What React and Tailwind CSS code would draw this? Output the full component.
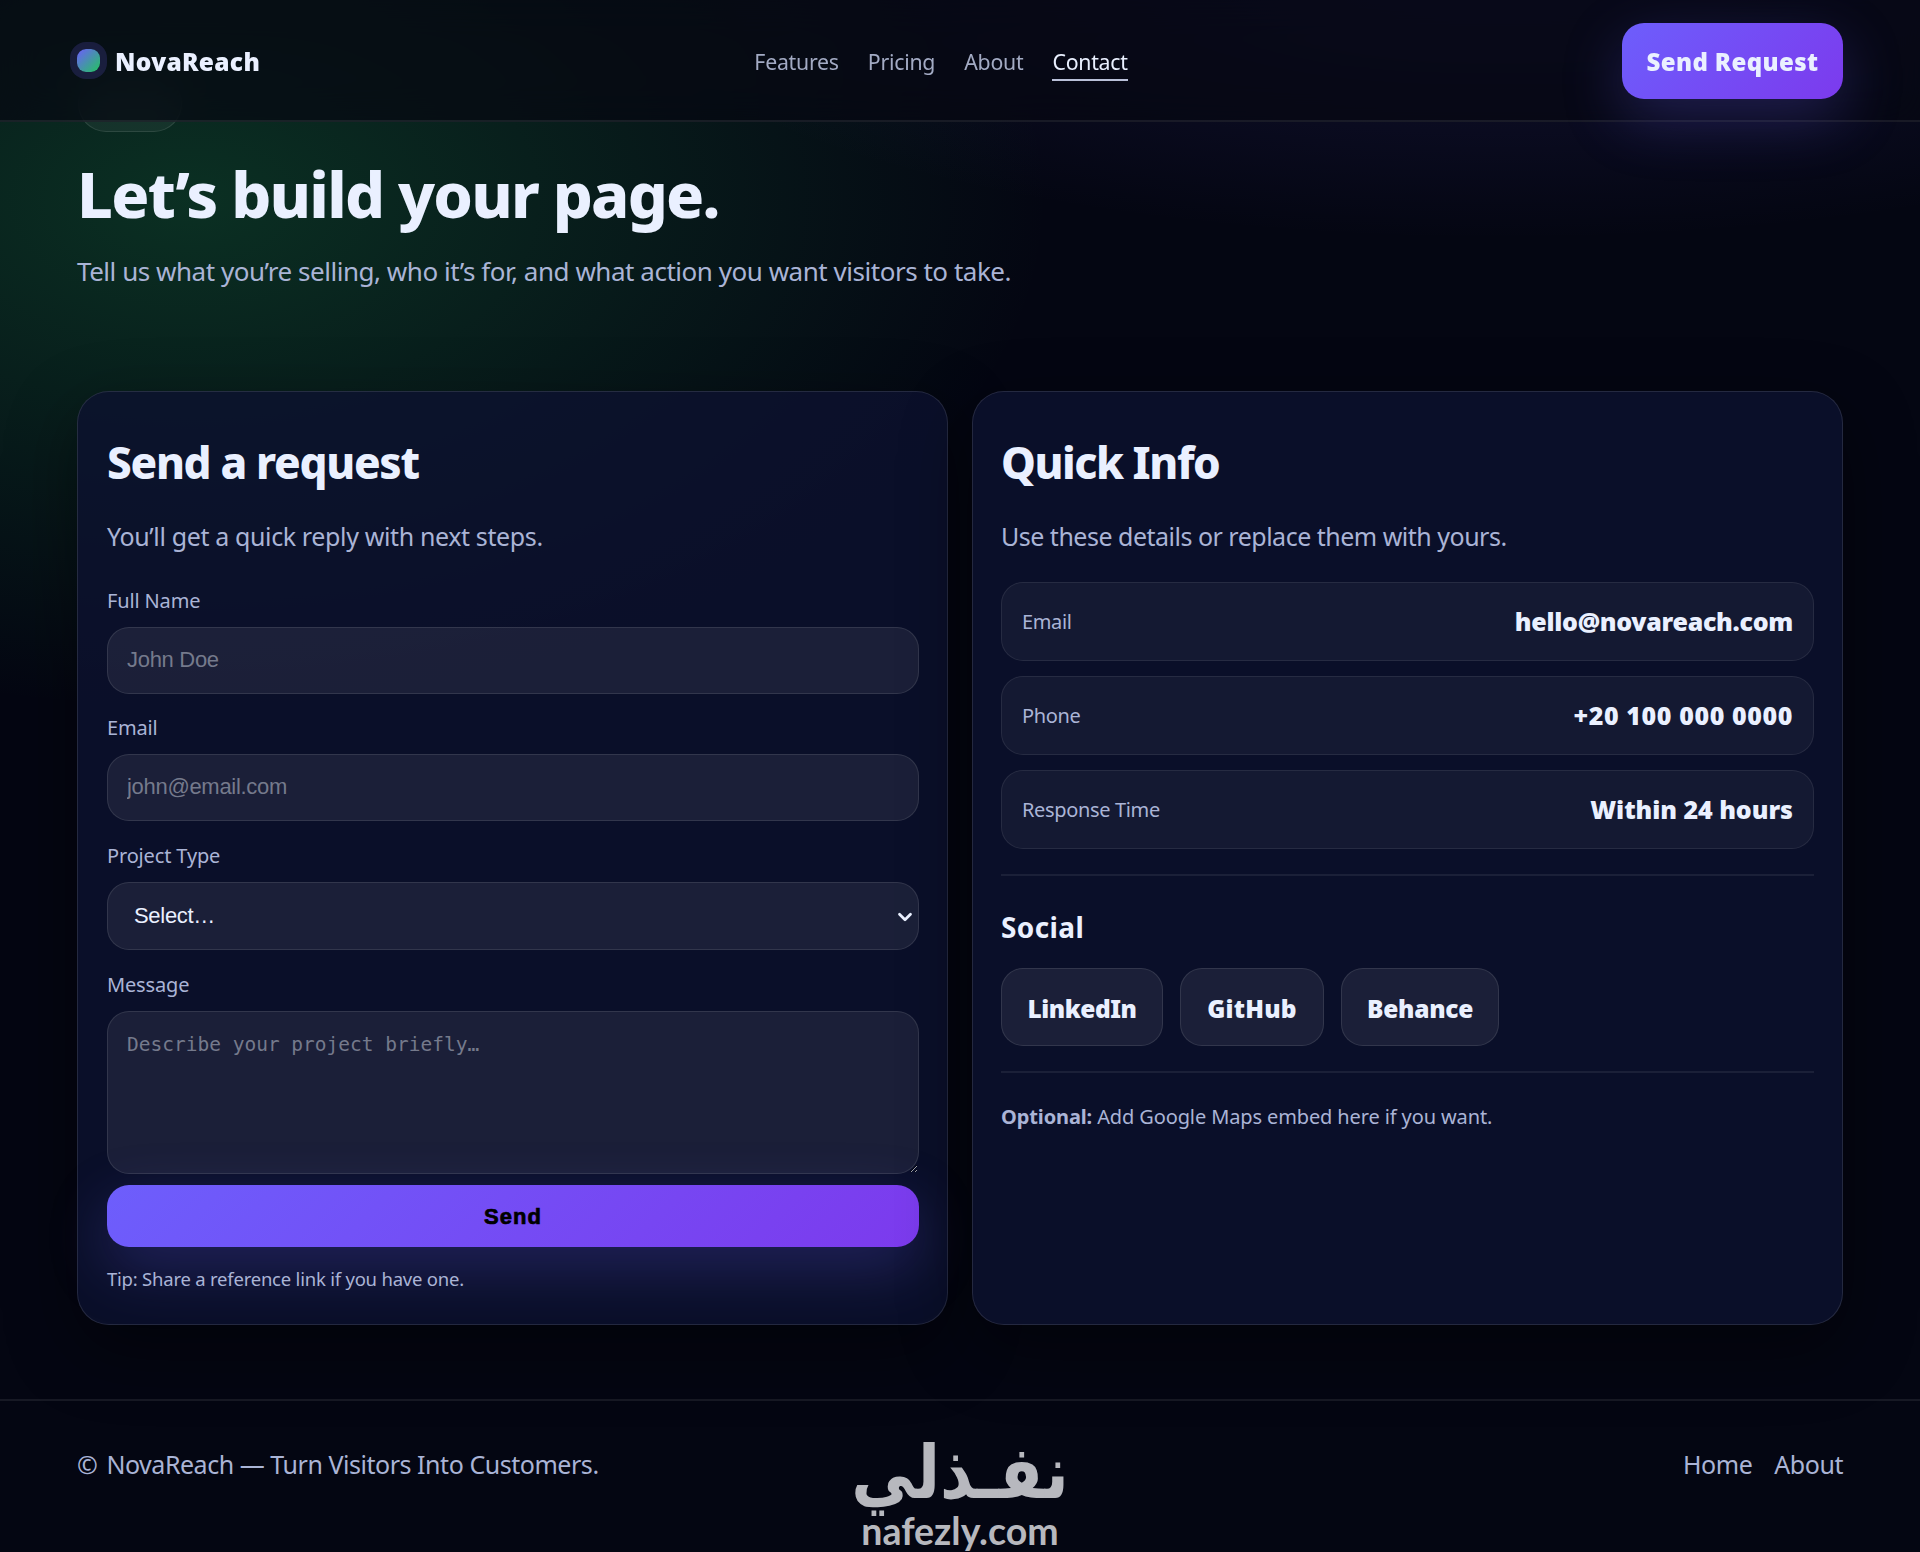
import { ChevronDown } from 'lucide-react';

const navLinks = ['Features', 'Pricing', 'About', 'Contact'];

const details = [
  { label: 'Email', value: 'hello@novareach.com', tracking: 'tracking-[-0.3px]' },
  { label: 'Phone', value: '+20 100 000 0000', tracking: 'tracking-[0.6px]' },
  { label: 'Response Time', value: 'Within 24 hours', tracking: 'tracking-[-0.05px]' },
];

const socials = [
  { name: 'LinkedIn', width: 'w-[162px]', tracking: 'tracking-[-0.5px]' },
  { name: 'GitHub', width: 'w-[144px]', tracking: 'tracking-[0.2px]' },
  { name: 'Behance', width: 'w-[158px]', tracking: 'tracking-[-0.3px]' },
];

const field =
  "block w-full rounded-[22px] border border-white/10 bg-white/[0.07] font-['Liberation_Sans',sans-serif] text-[22px] tracking-[-0.3px] text-[#eaf0ff] placeholder:text-[#757a8c] focus:outline-none";

const card =
  'rounded-[32px] border border-white/[0.11] bg-[#0c1230]/80 pr-[28px] pt-[40px] shadow-[0_24px_70px_rgba(0,0,0,0.45)]';

const gradientButton =
  'bg-[linear-gradient(135deg,#6d5efc,#7c3aed)] shadow-[0_20px_60px_rgba(109,94,252,0.25)]';

function Label({ children, className = '' }) {
  return (
    <label className={`mb-[11px] block text-[20px] leading-[30px] tracking-[-0.15px] text-[#aab4d6] ${className}`}>
      {children}
    </label>
  );
}

function Header() {
  return (
    <header className="sticky top-0 z-10 flex h-[122px] items-center justify-between border-b-2 border-white/[0.08] bg-[#050711]/70 px-[77px] pt-[2px] backdrop-blur-[18px]">
      <a href="#" className="flex items-center pt-[2px] text-[24.5px] font-black tracking-[0.3px] text-[#eaf0ff]">
        <span className="mr-[15px] h-[23px] w-[23px] -translate-y-[2px] rounded-[9px] bg-[linear-gradient(135deg,#6d5efc,#22c55e)] shadow-[0_0_0_7px_rgba(109,94,252,0.18)]" />
        NovaReach
      </a>

      <nav className="flex gap-[29px] pt-px text-[21.3px] leading-[30px] tracking-[-0.25px]">
        {navLinks.map((link) => (
          <a
            key={link}
            href="#"
            className={
              link === 'Contact'
                ? "relative text-[#eaf0ff] after:absolute after:inset-x-0 after:top-[32px] after:h-[2px] after:bg-[#b9c0d8] after:content-['']"
                : 'text-[#a3abc4]'
            }
          >
            {link}
          </a>
        ))}
      </nav>

      <a
        href="#"
        className={`flex h-[76px] w-[221px] items-center justify-center rounded-[22px] pt-px text-[24px] font-black tracking-[0.4px] text-[#eaf0ff] ${gradientButton}`}
      >
        Send Request
      </a>
    </header>
  );
}

function RequestForm() {
  return (
    <section className={`${card} pl-[29px]`}>
      <h2 className="text-[44px] font-extrabold leading-[60px] tracking-[-1.3px]">Send a request</h2>
      <p className="mt-[24px] text-[25px] leading-[40px] tracking-[-0.37px] text-[#aab4d6]">
        You’ll get a quick reply with next steps.
      </p>

      <form className="mt-[30px]">
        <Label>Full Name</Label>
        <input className={`${field} h-[67px] px-[19px] pb-[2px]`} placeholder="John Doe" />

        <Label className="mt-[19px]">Email</Label>
        <input className={`${field} h-[67px] px-[19px] pb-[2px]`} placeholder="john@email.com" />

        <Label className="mt-[20px]">Project Type</Label>
        <div className="relative">
          <select className={`${field} h-[68px] appearance-none px-[26px] pb-[2px]`}>
            <option>Select…</option>
          </select>
          <ChevronDown className="pointer-events-none absolute right-[3px] top-[24px] h-[22px] w-[22px] text-[#eaf0ff]" strokeWidth={3} />
        </div>

        <Label className="mt-[20px]">Message</Label>
        <textarea
          className="block h-[163px] w-full rounded-[22px] border border-white/10 bg-white/[0.07] px-[19px] py-[20px] font-['DejaVu_Sans_Mono',monospace] text-[19.5px] leading-[26px] text-[#eaf0ff] placeholder:text-[#757a8c] focus:outline-none"
          placeholder="Describe your project briefly…"
        />

        <button
          type="button"
          className={`mt-[11px] block h-[62px] w-full rounded-[22px] font-['Liberation_Sans',sans-serif] text-[22px] font-black tracking-[1.1px] text-black [-webkit-text-stroke:0.7px_black] ${gradientButton}`}
        >
          Send
        </button>
      </form>
      <p className="mt-[17px] text-[18.5px] leading-[30px] tracking-[-0.22px] text-[#aab4d6]">
        Tip: Share a reference link if you have one.
      </p>
    </section>
  );
}

function QuickInfo() {
  return (
    <section className={`${card} pl-[28px]`}>
      <h2 className="text-[44px] font-extrabold leading-[60px] tracking-[-1.45px]">Quick Info</h2>
      <p className="mt-[24px] text-[25px] leading-[40px] tracking-[-0.5px] text-[#aab4d6]">
        Use these details or replace them with yours.
      </p>

      <div className="mt-[26px] flex flex-col gap-[15px]">
        {details.map((d) => (
          <div
            key={d.label}
            className="flex h-[79px] items-center justify-between rounded-[22px] border border-white/[0.08] bg-white/[0.045] px-[20px]"
          >
            <span className="text-[20px] tracking-[-0.35px] text-[#aab4d6]">{d.label}</span>
            <span className={`pt-px text-[25px] font-black ${d.tracking}`}>{d.value}</span>
          </div>
        ))}
      </div>

      <hr className="mt-[25px] border-t-2 border-white/[0.07]" />

      <h3 className="mt-[31px] text-[28px] font-bold leading-[40px] tracking-[0.4px]">Social</h3>
      <div className="mt-[21px] flex gap-[17px]">
        {socials.map((s) => (
          <a
            key={s.name}
            href="#"
            className={`flex h-[78px] items-center justify-center rounded-[22px] border border-white/10 bg-white/[0.07] pt-[4px] text-[24.5px] font-black ${s.tracking} ${s.width}`}
          >
            {s.name}
          </a>
        ))}
      </div>

      <hr className="mt-[25px] border-t-2 border-white/[0.07]" />

      <p className="mt-[29px] text-[20px] leading-[30px] tracking-[-0.12px] text-[#aab4d6]">
        <strong>Optional:</strong> Add Google Maps embed here if you want.
      </p>
    </section>
  );
}

export default function App() {
  return (
    <div className="relative h-[1552px] overflow-hidden bg-[#040612] bg-[radial-gradient(860px_510px_at_190px_200px,rgba(34,197,94,0.22),transparent),radial-gradient(900px_270px_at_1500px_-30px,rgba(109,94,252,0.14),transparent)] font-['Noto_Sans',sans-serif] text-[#eaf0ff]">
      <Header />

      <main className="px-[77px]">
        {/* badge scrolled partly under the sticky header */}
        <div className="-mt-[46px] ml-px h-[56px] w-[104px] rounded-full border border-white/[0.1] bg-white/[0.05]" />
        <h1 className="mt-[26px] text-[63px] font-extrabold leading-[72px] tracking-[-1.75px]">Let’s build your page.</h1>
        <p className="mt-[21px] text-[26px] leading-[40px] tracking-[-0.47px] text-[#aab4d6]">
          Tell us what you’re selling, who it’s for, and what action you want visitors to take.
        </p>

        <div className="mt-[100px] grid h-[934px] grid-cols-2 gap-[24px]">
          <RequestForm />
          <QuickInfo />
        </div>
      </main>

      <footer className="mt-[74px] flex justify-between border-t-2 border-white/[0.08] px-[77px] pt-[43px] text-[25px] leading-[40px] tracking-[-0.46px] text-[#aab4d6]">
        <span>
          <span className="mr-[3px]">©</span> NovaReach — Turn Visitors Into Customers.
        </span>
        <div className="flex gap-[22px]">
          <a href="#">Home</a>
          <a href="#">About</a>
        </div>
      </footer>

      {/* marketplace watermark */}
      <div className="pointer-events-none absolute inset-x-0 bottom-0 flex flex-col items-center text-[#b7b8be]">
        <span lang="ar" dir="rtl" className="-mb-[6px] origin-bottom scale-y-115 font-['DejaVu_Sans',sans-serif] text-[64px] font-bold leading-[74px]">
          نفـذلي
        </span>
        <span className="font-['Lato',sans-serif] text-[37.5px] font-bold leading-[43px]">nafezly.com</span>
      </div>
    </div>
  );
}
